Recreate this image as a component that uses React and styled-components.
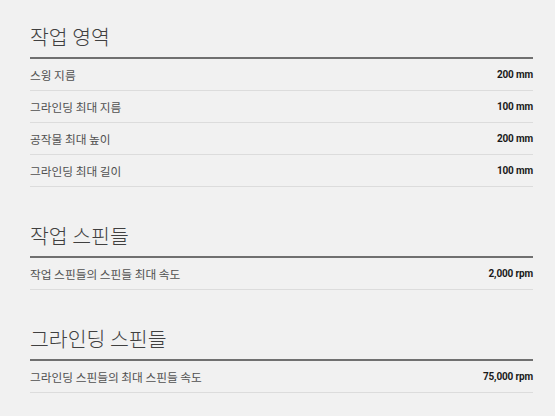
import styled, { createGlobalStyle } from "styled-components";

const GlobalStyle = createGlobalStyle`
  html, body {
    margin: 0;
    padding: 0;
    background: #f1f1f1;
  }
  body {
    font-family: "Noto Sans CJK KR", "Noto Sans", sans-serif;
  }
`;

const specs = [
  {
    title: "작업 영역",
    rows: [
      { label: "스윙 지름", value: "200 mm" },
      { label: "그라인딩 최대 지름", value: "100 mm" },
      { label: "공작물 최대 높이", value: "200 mm" },
      { label: "그라인딩 최대 길이", value: "100 mm" },
    ],
  },
  {
    title: "작업 스핀들",
    rows: [{ label: "작업 스핀들의 스핀들 최대 속도", value: "2,000 rpm" }],
  },
  {
    title: "그라인딩 스핀들",
    rows: [{ label: "그라인딩 스핀들의 최대 스핀들 속도", value: "75,000 rpm" }],
  },
];

const Page = styled.main`
  padding: 22px 22px 24px 30px;
  background: #f1f1f1;
  min-height: 416px;
  box-sizing: border-box;
`;

const Section = styled.section`
  & + & {
    margin-top: 34px;
  }
`;

const Title = styled.h2`
  margin: 0;
  padding: 0 0 7px;
  font-size: 20.5px;
  line-height: 28px;
  font-weight: 300;
  color: #404040;
  border-bottom: 2px solid #707070;
`;

const Row = styled.div`
  display: flex;
  justify-content: space-between;
  align-items: center;
  height: 31px;
  border-bottom: 1px solid #dcdcdc;
`;

const Label = styled.span`
  font-size: 11.7px;
  color: #505050;
`;

const Value = styled.span`
  font-family: Roboto, "Liberation Sans", sans-serif;
  font-size: 10px;
  font-weight: 700;
  letter-spacing: -0.15px;
  color: #1a1a1a;
`;

export default function App() {
  return (
    <>
      <GlobalStyle />
      <Page>
        {specs.map((s) => (
          <Section key={s.title}>
            <Title>{s.title}</Title>
            {s.rows.map((r) => (
              <Row key={r.label}>
                <Label>{r.label}</Label>
                <Value>{r.value}</Value>
              </Row>
            ))}
          </Section>
        ))}
      </Page>
    </>
  );
}
